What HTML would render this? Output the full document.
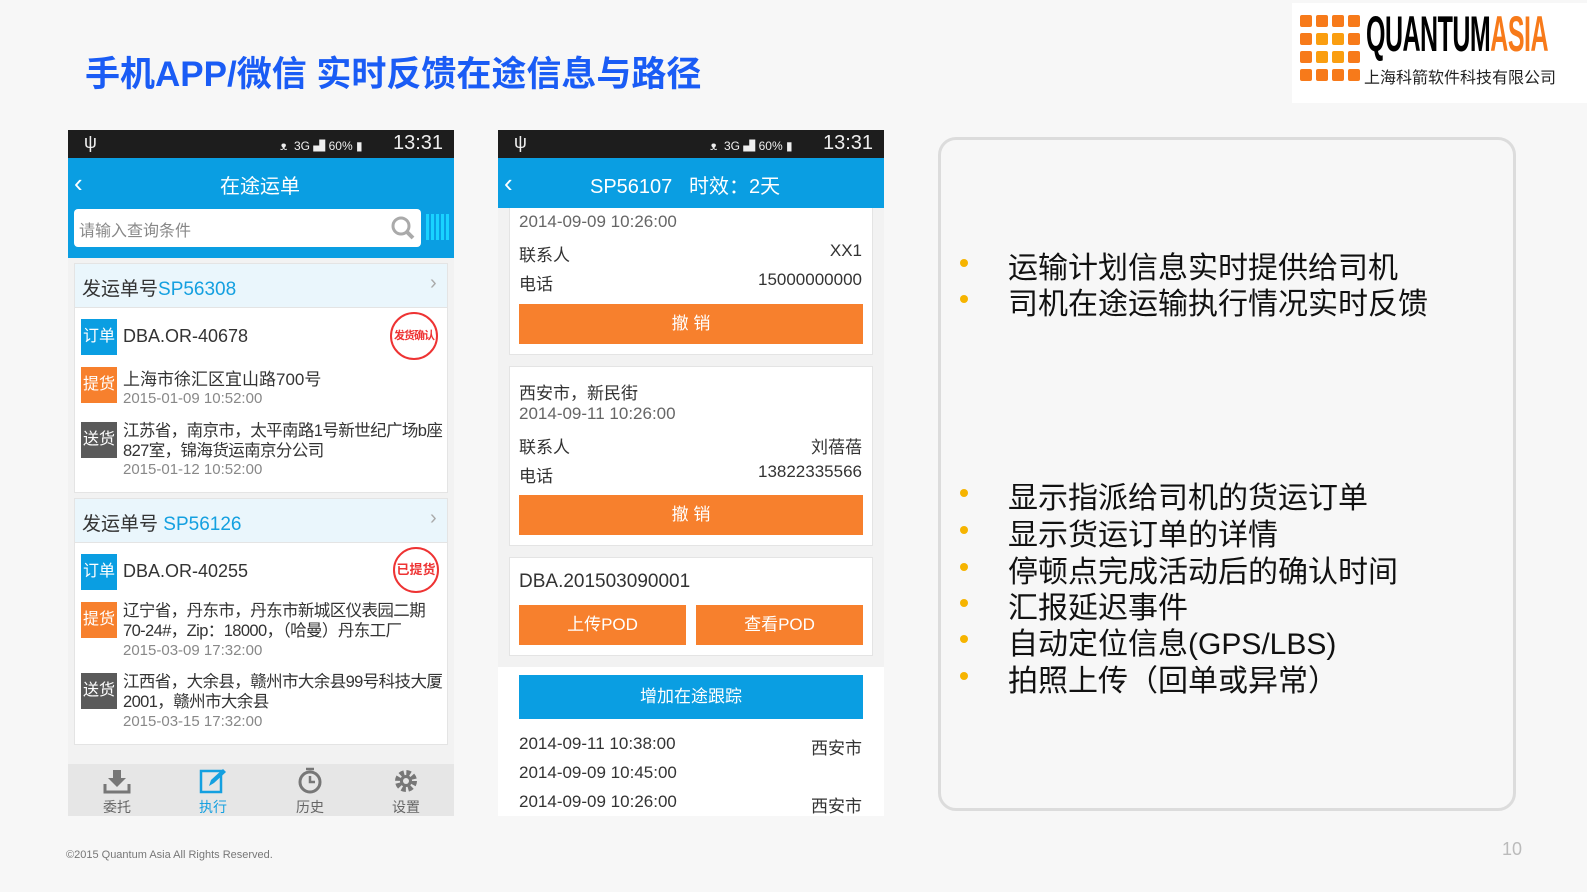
<!DOCTYPE html><html><head><meta charset="utf-8"><style>
*{margin:0;padding:0;box-sizing:border-box}
body{width:1587px;height:892px;background:#f7f7f7;position:relative;overflow:hidden;font-family:"Liberation Sans","Noto Sans CJK SC",sans-serif;color:#333}
.a{position:absolute;white-space:nowrap}
.sb{background:#1d1d1d;color:#eee;height:28px}
.tag{position:absolute;width:36px;height:36px;color:#fff;font-size:16px;text-align:center;line-height:36px}
.btn{position:absolute;background:#f7802d;color:#fff;text-align:center;font-size:17px}
.bl{position:absolute;left:1008px;font-size:30px;color:#111}
.dot{position:absolute;left:960px;width:8px;height:8px;border-radius:50%;background:#f6b400}
.p2{font-size:17px}
.ad{font-size:16.5px;line-height:20px;letter-spacing:-0.6px}
</style></head><body>
<div class="a" style="left:85px;top:46px;font-size:35px;font-weight:bold;color:#1a5cf5">手机APP/微信 实时反馈在途信息与路径</div>
<!-- logo -->
<div class="a" style="left:1292px;top:3px;width:295px;height:100px;background:#fff"></div>
<svg class="a" style="left:1300px;top:15px" width="62" height="66">
<g fill="#f77a1a"><rect x="0" y="0" width="12" height="12" rx="2"/><rect x="16" y="0" width="12" height="12" rx="2"/><rect x="32" y="0" width="12" height="12" rx="2"/><rect x="48" y="0" width="12" height="12" rx="2"/>
<rect x="0" y="18" width="12" height="12" rx="2"/><rect x="48" y="18" width="12" height="12" rx="2"/><rect x="0" y="36" width="12" height="12" rx="2"/><rect x="48" y="36" width="12" height="12" rx="2"/>
<rect x="0" y="54" width="12" height="12" rx="2"/><rect x="16" y="54" width="12" height="12" rx="2"/><rect x="32" y="54" width="12" height="12" rx="2"/><rect x="48" y="54" width="12" height="12" rx="2"/></g>
<g fill="#fa9e10"><rect x="16" y="18" width="12" height="12" rx="2"/><rect x="32" y="18" width="12" height="12" rx="2"/><rect x="16" y="36" width="12" height="12" rx="2"/><rect x="32" y="36" width="12" height="12" rx="2"/></g></svg>
<div class="a" style="left:1366px;top:6px;font-size:50px;font-weight:bold;transform:scaleX(0.5);transform-origin:left;letter-spacing:-1px;line-height:56px"><span style="color:#000">QUANTUM</span><span style="color:#f77a1a">ASIA</span></div>
<div class="a" style="left:1364px;top:64px;font-size:16px;color:#222">上海科箭软件科技有限公司</div>

<!-- phone 1 -->
<div class="a" style="left:68px;top:130px;width:386px;height:686px;background:#f2f2f2"></div>
<div class="a sb" style="left:68px;top:130px;width:386px"><span class="a" style="left:16px;top:2px;font-size:18px">ψ</span><span class="a" style="left:212px;top:7px;font-size:12px">ᴥ &nbsp;3G ▟ 60% ▮</span><span class="a" style="left:325px;top:2px;font-size:20px">13:31</span></div>
<div class="a" style="left:68px;top:158px;width:386px;height:100px;background:#0a9ee2"></div>
<div class="a" style="left:74px;top:168px;font-size:26px;color:#fff">‹</div>
<div class="a" style="left:220px;top:170px;font-size:20px;color:#fff">在途运单</div>
<div class="a" style="left:74px;top:209px;width:347px;height:38px;background:#fff;border-radius:4px"></div>
<div class="a" style="left:79px;top:217px;font-size:16px;color:#888">请输入查询条件</div>
<svg class="a" style="left:390px;top:215px" width="26" height="26"><circle cx="11" cy="11" r="8" fill="none" stroke="#aaa" stroke-width="3"/><path d="M17 17 L23 23" stroke="#aaa" stroke-width="4"/></svg>
<div class="a" style="left:426px;top:214px;width:24px;height:26px;background:repeating-linear-gradient(90deg,#19d3ff 0 3px,transparent 3px 5px)"></div>
<!-- card1 -->
<div class="a" style="left:74px;top:263px;width:374px;height:230px;background:#fff;border:1px solid #e4e4e4"></div>
<div class="a" style="left:74px;top:263px;width:374px;height:45px;background:#eaf6fc;border:1px solid #e4e4e4"></div>
<div class="a" style="left:82px;top:274px;font-size:19px;color:#333">发运单号<span style="color:#14a0e0">SP56308</span></div>
<div class="a" style="left:430px;top:272px;font-size:20px;color:#aaa">›</div>
<div class="tag" style="left:81px;top:319px;background:#0a9ee2">订单</div>
<div class="a" style="left:123px;top:326px;font-size:18px">DBA.OR-40678</div>
<div class="a" style="left:390px;top:312px;width:48px;height:48px;border:2px solid #e33;border-radius:50%;color:#e33;font-size:11px;text-align:center;line-height:44px;font-weight:bold;letter-spacing:-1px;overflow:hidden">发货确认</div>
<div class="tag" style="left:81px;top:367px;background:#f7802d">提货</div>
<div class="a" style="left:123px;top:365px;font-size:17px">上海市徐汇区宜山路700号</div>
<div class="a" style="left:123px;top:390px;font-size:15px;color:#888">2015-01-09 10:52:00</div>
<div class="tag" style="left:81px;top:422px;background:#5a5a5a">送货</div>
<div class="a ad" style="left:123px;top:421px">江苏省，南京市，太平南路1号新世纪广场b座<br>827室，锦海货运南京分公司</div>
<div class="a" style="left:123px;top:461px;font-size:15px;color:#888">2015-01-12 10:52:00</div>
<!-- card2 -->
<div class="a" style="left:74px;top:498px;width:374px;height:247px;background:#fff;border:1px solid #e4e4e4"></div>
<div class="a" style="left:74px;top:498px;width:374px;height:45px;background:#eaf6fc;border:1px solid #e4e4e4"></div>
<div class="a" style="left:82px;top:509px;font-size:19px;color:#333">发运单号 <span style="color:#14a0e0">SP56126</span></div>
<div class="a" style="left:430px;top:507px;font-size:20px;color:#aaa">›</div>
<div class="tag" style="left:81px;top:554px;background:#0a9ee2">订单</div>
<div class="a" style="left:123px;top:561px;font-size:18px">DBA.OR-40255</div>
<div class="a" style="left:393px;top:547px;width:46px;height:46px;border:2px solid #e33;border-radius:50%;color:#e33;font-size:13px;text-align:center;line-height:42px;font-weight:bold">已提货</div>
<div class="tag" style="left:81px;top:602px;background:#f7802d">提货</div>
<div class="a ad" style="left:123px;top:601px">辽宁省，丹东市，丹东市新城区仪表园二期<br>70-24#，Zip：18000，（哈曼）丹东工厂</div>
<div class="a" style="left:123px;top:642px;font-size:15px;color:#888">2015-03-09 17:32:00</div>
<div class="tag" style="left:81px;top:673px;background:#5a5a5a">送货</div>
<div class="a ad" style="left:123px;top:672px">江西省，大余县，赣州市大余县99号科技大厦<br>2001，赣州市大余县</div>
<div class="a" style="left:123px;top:713px;font-size:15px;color:#888">2015-03-15 17:32:00</div>
<!-- tabbar -->
<div class="a" style="left:68px;top:764px;width:386px;height:52px;background:#e6e6e6"></div>
<svg class="a" style="left:103px;top:768px" width="28" height="26"><path d="M10 2h8v8h5l-9 9-9-9h5z" fill="#777"/><path d="M2 16v8h24v-8" stroke="#777" stroke-width="3" fill="none"/></svg>
<svg class="a" style="left:199px;top:768px" width="28" height="26"><rect x="2" y="3" width="20" height="21" fill="none" stroke="#14a0e0" stroke-width="2.5"/><path d="M10 18l2-6 12-11 3 3-12 11z" fill="#14a0e0"/></svg>
<svg class="a" style="left:297px;top:767px" width="28" height="28"><circle cx="13" cy="15" r="10" fill="none" stroke="#777" stroke-width="3"/><path d="M9 2h8M13 9v6h5" stroke="#777" stroke-width="2.5" fill="none"/></svg>
<svg class="a" style="left:393px;top:768px" width="26" height="26"><circle cx="13" cy="13" r="8" fill="none" stroke="#777" stroke-width="6" stroke-dasharray="4 2.3"/><circle cx="13" cy="13" r="6" fill="#777"/><circle cx="13" cy="13" r="3" fill="#e6e6e6"/></svg>
<div class="a" style="left:103px;top:797px;font-size:14px;color:#666">委托</div>
<div class="a" style="left:199px;top:797px;font-size:14px;color:#14a0e0">执行</div>
<div class="a" style="left:296px;top:797px;font-size:14px;color:#666">历史</div>
<div class="a" style="left:392px;top:797px;font-size:14px;color:#666">设置</div>

<!-- phone 2 -->
<div class="a" style="left:498px;top:130px;width:386px;height:686px;background:#f2f2f2"></div>
<div class="a sb" style="left:498px;top:130px;width:386px"><span class="a" style="left:16px;top:2px;font-size:18px">ψ</span><span class="a" style="left:212px;top:7px;font-size:12px">ᴥ &nbsp;3G ▟ 60% ▮</span><span class="a" style="left:325px;top:2px;font-size:20px">13:31</span></div>
<div class="a" style="left:498px;top:158px;width:386px;height:50px;background:#0a9ee2"></div>
<div class="a" style="left:504px;top:168px;font-size:26px;color:#fff">‹</div>
<div class="a" style="left:590px;top:170px;font-size:20px;color:#fff">SP56107 &nbsp;&nbsp;时效：2天</div>
<div class="a" style="left:509px;top:208px;width:364px;height:147px;background:#fff;border:1px solid #e4e4e4;border-top:none"></div>
<div class="a p2" style="left:519px;top:212px;color:#666">2014-09-09 10:26:00</div>
<div class="a p2" style="left:519px;top:241px">联系人</div><div class="a p2" style="right:725px;top:241px">XX1</div>
<div class="a p2" style="left:519px;top:270px">电话</div><div class="a p2" style="right:725px;top:270px">15000000000</div>
<div class="btn" style="left:519px;top:304px;width:344px;height:40px;line-height:40px">撤 销</div>
<div class="a" style="left:509px;top:366px;width:364px;height:180px;background:#fff;border:1px solid #e4e4e4"></div>
<div class="a p2" style="left:519px;top:379px">西安市，新民街</div>
<div class="a p2" style="left:519px;top:404px;color:#666">2014-09-11 10:26:00</div>
<div class="a p2" style="left:519px;top:433px">联系人</div><div class="a p2" style="right:725px;top:433px">刘蓓蓓</div>
<div class="a p2" style="left:519px;top:462px">电话</div><div class="a p2" style="right:725px;top:462px">13822335566</div>
<div class="btn" style="left:519px;top:495px;width:344px;height:40px;line-height:40px">撤 销</div>
<div class="a" style="left:509px;top:557px;width:364px;height:99px;background:#fff;border:1px solid #e4e4e4"></div>
<div class="a" style="left:519px;top:571px;font-size:19px">DBA.201503090001</div>
<div class="btn" style="left:519px;top:605px;width:167px;height:40px;line-height:40px">上传POD</div>
<div class="btn" style="left:696px;top:605px;width:167px;height:40px;line-height:40px">查看POD</div>
<div class="a" style="left:498px;top:667px;width:386px;height:149px;background:#fff"></div>
<div class="a" style="left:519px;top:675px;width:344px;height:44px;background:#0a9ee2;color:#fff;font-size:17px;text-align:center;line-height:44px">增加在途跟踪</div>
<div class="a p2" style="left:519px;top:734px">2014-09-11 10:38:00</div><div class="a p2" style="right:725px;top:734px">西安市</div>
<div class="a p2" style="left:519px;top:763px">2014-09-09 10:45:00</div>
<div class="a p2" style="left:519px;top:792px">2014-09-09 10:26:00</div><div class="a p2" style="right:725px;top:792px">西安市</div>

<!-- right panel -->
<div class="a" style="left:938px;top:137px;width:578px;height:674px;border:3px solid #dcdcdc;border-radius:18px;background:#f7f7f7"></div>
<div class="dot" style="top:259px"></div><div class="bl" style="top:243px">运输计划信息实时提供给司机</div>
<div class="dot" style="top:295px"></div><div class="bl" style="top:279px">司机在途运输执行情况实时反馈</div>
<div class="dot" style="top:489px"></div><div class="bl" style="top:473px">显示指派给司机的货运订单</div>
<div class="dot" style="top:526px"></div><div class="bl" style="top:510px">显示货运订单的详情</div>
<div class="dot" style="top:563px"></div><div class="bl" style="top:547px">停顿点完成活动后的确认时间</div>
<div class="dot" style="top:599px"></div><div class="bl" style="top:583px">汇报延迟事件</div>
<div class="dot" style="top:635px"></div><div class="bl" style="top:619px">自动定位信息(GPS/LBS)</div>
<div class="dot" style="top:672px"></div><div class="bl" style="top:656px">拍照上传（回单或异常）</div>

<div class="a" style="left:66px;top:849px;font-size:11px;color:#777">©2015 Quantum Asia All Rights Reserved.</div>
<div class="a" style="left:1502px;top:839px;font-size:18px;color:#bbb">10</div>
</body></html>
